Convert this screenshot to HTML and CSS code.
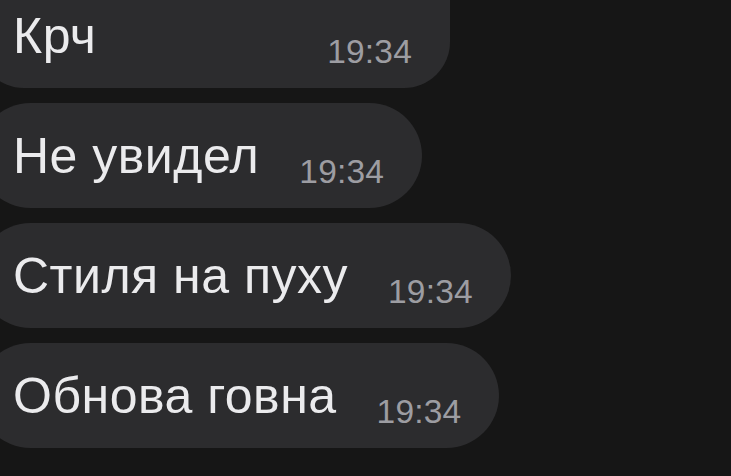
FILE: index.html
```html
<!DOCTYPE html>
<html lang="ru">
<head>
<meta charset="utf-8">
<title>Chat</title>
<link rel="stylesheet" href="styles.css">
</head>
<body>
<div class="chat">
  <div class="bubble bubble-first">
    <span class="text">Крч</span>
    <span class="time">19:34</span>
  </div>
  <div class="bubble">
    <span class="text">Не увидел</span>
    <span class="time">19:34</span>
  </div>
  <div class="bubble">
    <span class="text">Стиля на пуху</span>
    <span class="time">19:34</span>
  </div>
  <div class="bubble">
    <span class="text">Обнова говна</span>
    <span class="time">19:34</span>
  </div>
</div>
</body>
</html>
```

FILE: styles.css
```css
html, body {
  margin: 0;
  padding: 0;
  background: #161616;
  height: 100%;
  overflow: hidden;
}

body {
  font-family: "Liberation Sans", Arial, sans-serif;
}

.chat {
  display: flex;
  flex-direction: column;
  align-items: flex-start;
  gap: 15px;
  margin-top: -72px;
  margin-left: -22px;
}

.bubble {
  display: flex;
  align-items: flex-end;
  gap: 40px;
  background: #2c2c2e;
  border-radius: 52.5px;
  padding: 23px 38px 22px 35px;
  box-sizing: border-box;
  height: 105px;
}

.bubble-first {
  height: 160px;
  width: 472px;
  border-radius: 46px;
  justify-content: space-between;
}

.text {
  font-size: 50px;
  line-height: 60px;
  letter-spacing: 0.5px;
  color: #ebebed;
  white-space: nowrap;
}

.time {
  font-size: 33.5px;
  line-height: 40px;
  letter-spacing: 0.2px;
  color: #9d9da2;
  margin-bottom: -6px;
  white-space: nowrap;
}
```
